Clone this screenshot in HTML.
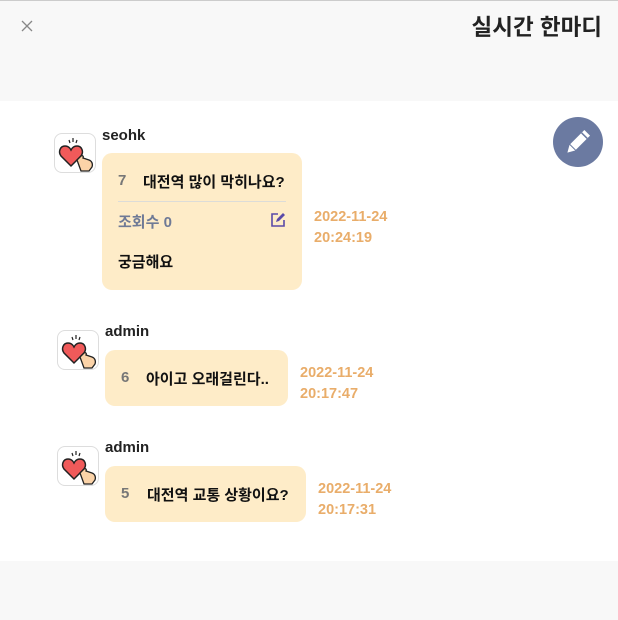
<!DOCTYPE html>
<html><head><meta charset="utf-8"><style>
*{margin:0;padding:0;box-sizing:border-box}
body{width:618px;height:620px;background:#fff;font-family:"Liberation Sans","Noto Sans CJK KR",sans-serif;position:relative;overflow:hidden;color:#111}
.top{position:absolute;left:0;top:0;width:618px;height:101px;background:#f8f8f8;border-top:1px solid #ccc}
.bot{position:absolute;left:0;top:561px;width:618px;height:59px;background:#f8f8f8}
.title{position:absolute;right:16px;top:10px;font-size:22.5px;font-weight:bold;color:#222}
.av{position:absolute;width:42px;height:40px;border:1px solid #ddd;border-radius:8px;background:#fff;overflow:hidden}
.un{position:absolute;font-size:15px;font-weight:bold;color:#222}
.bub{position:absolute;background:#feecc8;border-radius:10px}
.n{position:absolute;font-size:15px;font-weight:bold;color:#777}
.t{position:absolute;font-size:15px;font-weight:bold;color:#111;white-space:nowrap}
.d{position:absolute;font-size:14.5px;font-weight:bold;color:#e9ad6a;line-height:21px}
.fab{position:absolute;left:553px;top:117px;width:50px;height:50px;border-radius:50%;background:#6b7aa1}
</style></head><body>
<div class="top"></div><div class="bot"></div>
<svg style="position:absolute;left:21px;top:20px" width="12" height="12" viewBox="0 0 12 12"><path d="M1 1L11 11M11 1L1 11" stroke="#888" stroke-width="1.3"/></svg>
<div class="title">실시간 한마디</div>
<div class="fab"><svg width="50" height="50" viewBox="0 0 50 50"><g transform="rotate(45 25 25)"><rect x="21" y="12" width="8" height="20" fill="#fff"/><line x1="21" y1="16" x2="29" y2="16" stroke="#6b7aa1" stroke-width="1.5"/><polygon points="21,33 29,33 25,40" fill="#fff"/></g></svg></div>

<svg style="display:none"><symbol id="h" viewBox="0 0 42 40"><path d="M10 12c-5 0-7 6-4 10l10 10 10-10c3-4 1-10-4-10-3 0-5 2-6 4-1-2-3-4-6-4z" fill="#f05a5a" stroke="#222" stroke-width="1.5"/><path d="M22 26l4-4c1-1 3 0 2 2l6 2c3 1 4 4 3 7l-3 4h-8z" fill="#fbd3a8" stroke="#222" stroke-width="1.3"/><path d="M14 6l1 3M18 4v4M22 6l-1 3" stroke="#222" stroke-width="1.2"/></symbol></svg>

<div class="av" style="left:54px;top:133px"><svg width="42" height="40"><use href="#h"/></svg></div>
<div class="un" style="left:102px;top:127px">seohk</div>
<div class="bub" style="left:102px;top:153px;width:200px;height:137px"></div>
<div class="n" style="left:118px;top:172px">7</div>
<div class="t" style="left:143px;top:171px">대전역 많이 막히나요?</div>
<div style="position:absolute;left:118px;top:201px;width:168px;height:1px;background:#dcdcd8"></div>
<div class="t" style="left:118px;top:211px;color:#6f7a96;font-size:15px">조회수 0</div>
<svg style="position:absolute;left:270px;top:212px" width="16" height="16" viewBox="0 0 16 16"><path d="M8 2H2v12h12V8" fill="none" stroke="#5a4aa8" stroke-width="1.6"/><path d="M6 10l1-3 6-6 2 2-6 6z" fill="#5a4aa8"/></svg>
<div class="t" style="left:118px;top:251px">궁금해요</div>
<div class="d" style="left:314px;top:207px">2022-11-24<br>20:24:19</div>

<div class="av" style="left:57px;top:330px"><svg width="42" height="40"><use href="#h"/></svg></div>
<div class="un" style="left:105px;top:323px">admin</div>
<div class="bub" style="left:105px;top:350px;width:183px;height:56px"></div>
<div class="n" style="left:121px;top:369px">6</div>
<div class="t" style="left:146px;top:368px">아이고 오래걸린다..</div>
<div class="d" style="left:300px;top:363px">2022-11-24<br>20:17:47</div>

<div class="av" style="left:57px;top:446px"><svg width="42" height="40"><use href="#h"/></svg></div>
<div class="un" style="left:105px;top:439px">admin</div>
<div class="bub" style="left:105px;top:466px;width:201px;height:56px"></div>
<div class="n" style="left:121px;top:485px">5</div>
<div class="t" style="left:147px;top:484px">대전역 교통 상황이요?</div>
<div class="d" style="left:318px;top:479px">2022-11-24<br>20:17:31</div>
</body></html>
